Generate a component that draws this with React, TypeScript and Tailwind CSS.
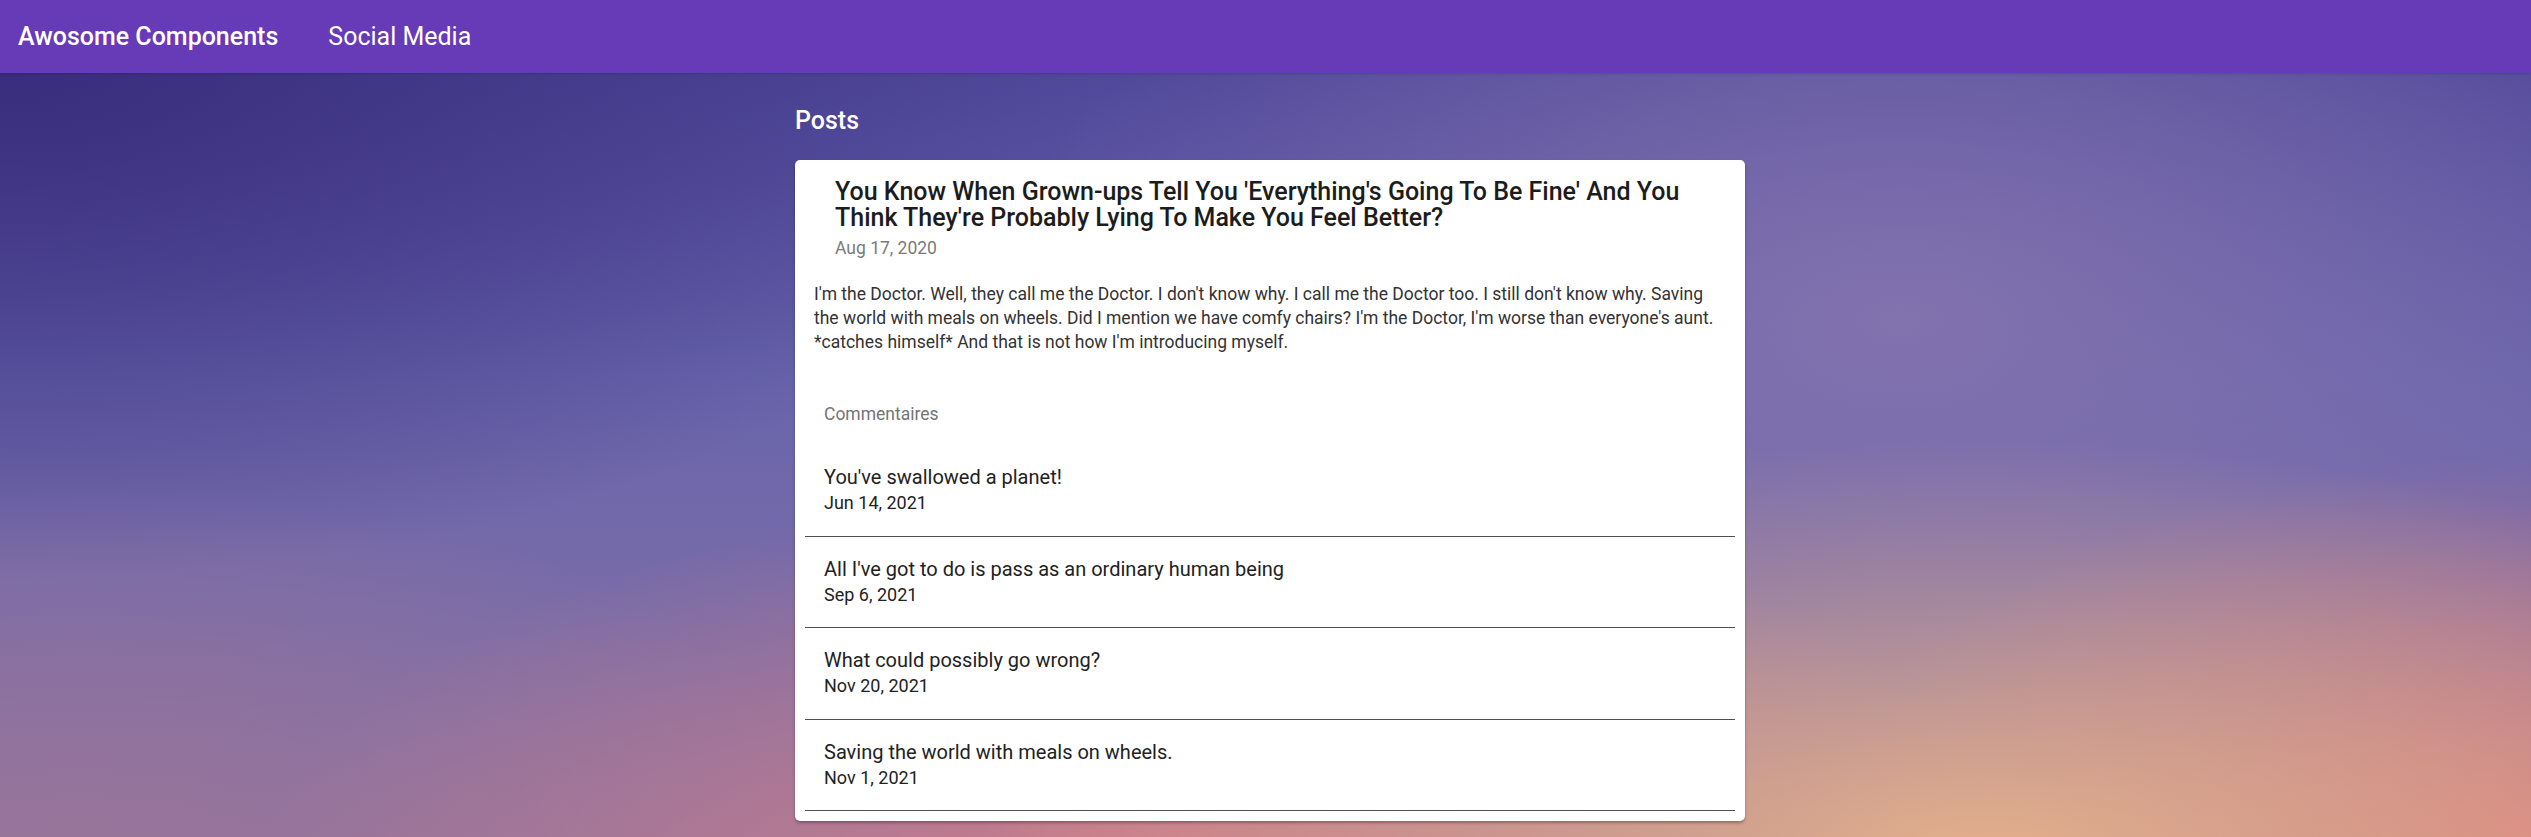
import React from 'react'

const comments = [
    { text: "You've swallowed a planet!", date: 'Jun 14, 2021' },
    { text: "All I've got to do is pass as an ordinary human being", date: 'Sep 6, 2021' },
    { text: 'What could possibly go wrong?', date: 'Nov 20, 2021' },
    { text: 'Saving the world with meals on wheels.', date: 'Nov 1, 2021' },
]

export default function App() {
    return (
        <div className="min-h-screen font-['Roboto',sans-serif] bg-[#5a52a0] bg-[image:radial-gradient(1000px_420px_at_1980px_860px,#e4b08a,transparent),radial-gradient(700px_380px_at_2531px_837px,#d47a80,transparent),radial-gradient(900px_380px_at_1150px_880px,#cd7c88,transparent),radial-gradient(800px_420px_at_80px_900px,#9a7498,transparent),radial-gradient(1100px_520px_at_0px_60px,#382d7c,transparent),radial-gradient(900px_500px_at_1900px_320px,#8272ae,transparent),linear-gradient(to_bottom,#4a4196_0%,#6864ac_45%,#8a74a4_100%)]">
            <header className="h-[73px] bg-[#673ab7] flex items-center gap-[50px] px-[18px] text-white text-[25px] shadow-sm">
                <span className="font-medium">Awosome Components</span>
                <span>Social Media</span>
            </header>

            <main className="mx-auto w-[959px] pl-[9px] pt-[29px]">
                <h2 className="text-white text-[25px] leading-[37px] font-medium">Posts</h2>

                <div className="mt-[21px] bg-white rounded-[5px] shadow-[0_2px_3px_rgba(0,0,0,0.3)] pb-[10px]">
                    <div className="pt-[19px] pl-[40px] pr-[19px]">
                        <h3 className="text-[25px] leading-[26px] font-medium text-[#1c1c1c]">
                            You Know When Grown-ups Tell You 'Everything's Going To Be Fine' And You Think They're Probably Lying To Make You Feel Better?
                        </h3>
                        <p className="mt-[3px] text-[17.5px] leading-[28px] text-[#7a7a7a]">Aug 17, 2020</p>
                    </div>

                    <p className="px-[19px] pt-[20px] text-[17.5px] leading-[24px] text-[#333333]">
                        I'm the Doctor. Well, they call me the Doctor. I don't know why. I call me the Doctor too. I still don't know why. Saving the world with meals on wheels. Did I mention we have comfy chairs? I'm the Doctor, I'm worse than everyone's aunt. *catches himself* And that is not how I'm introducing myself.
                    </p>

                    <div className="mt-[30px] mx-[10px]">
                        <div className="px-[19px] text-[17.5px] leading-[61px] text-[#757575]">Commentaires</div>
                        <ul>
                            {comments.map((c) => (
                                <li key={c.text} className="px-[19px] pt-[18px] pb-[21.5px] border-b border-[#505050]">
                                    <p className="text-[20px] leading-[28px] text-[#222222]">{c.text}</p>
                                    <p className="text-[18px] leading-[23px] text-[#222222]">{c.date}</p>
                                </li>
                            ))}
                        </ul>
                    </div>
                </div>
            </main>
        </div>
    )
}
